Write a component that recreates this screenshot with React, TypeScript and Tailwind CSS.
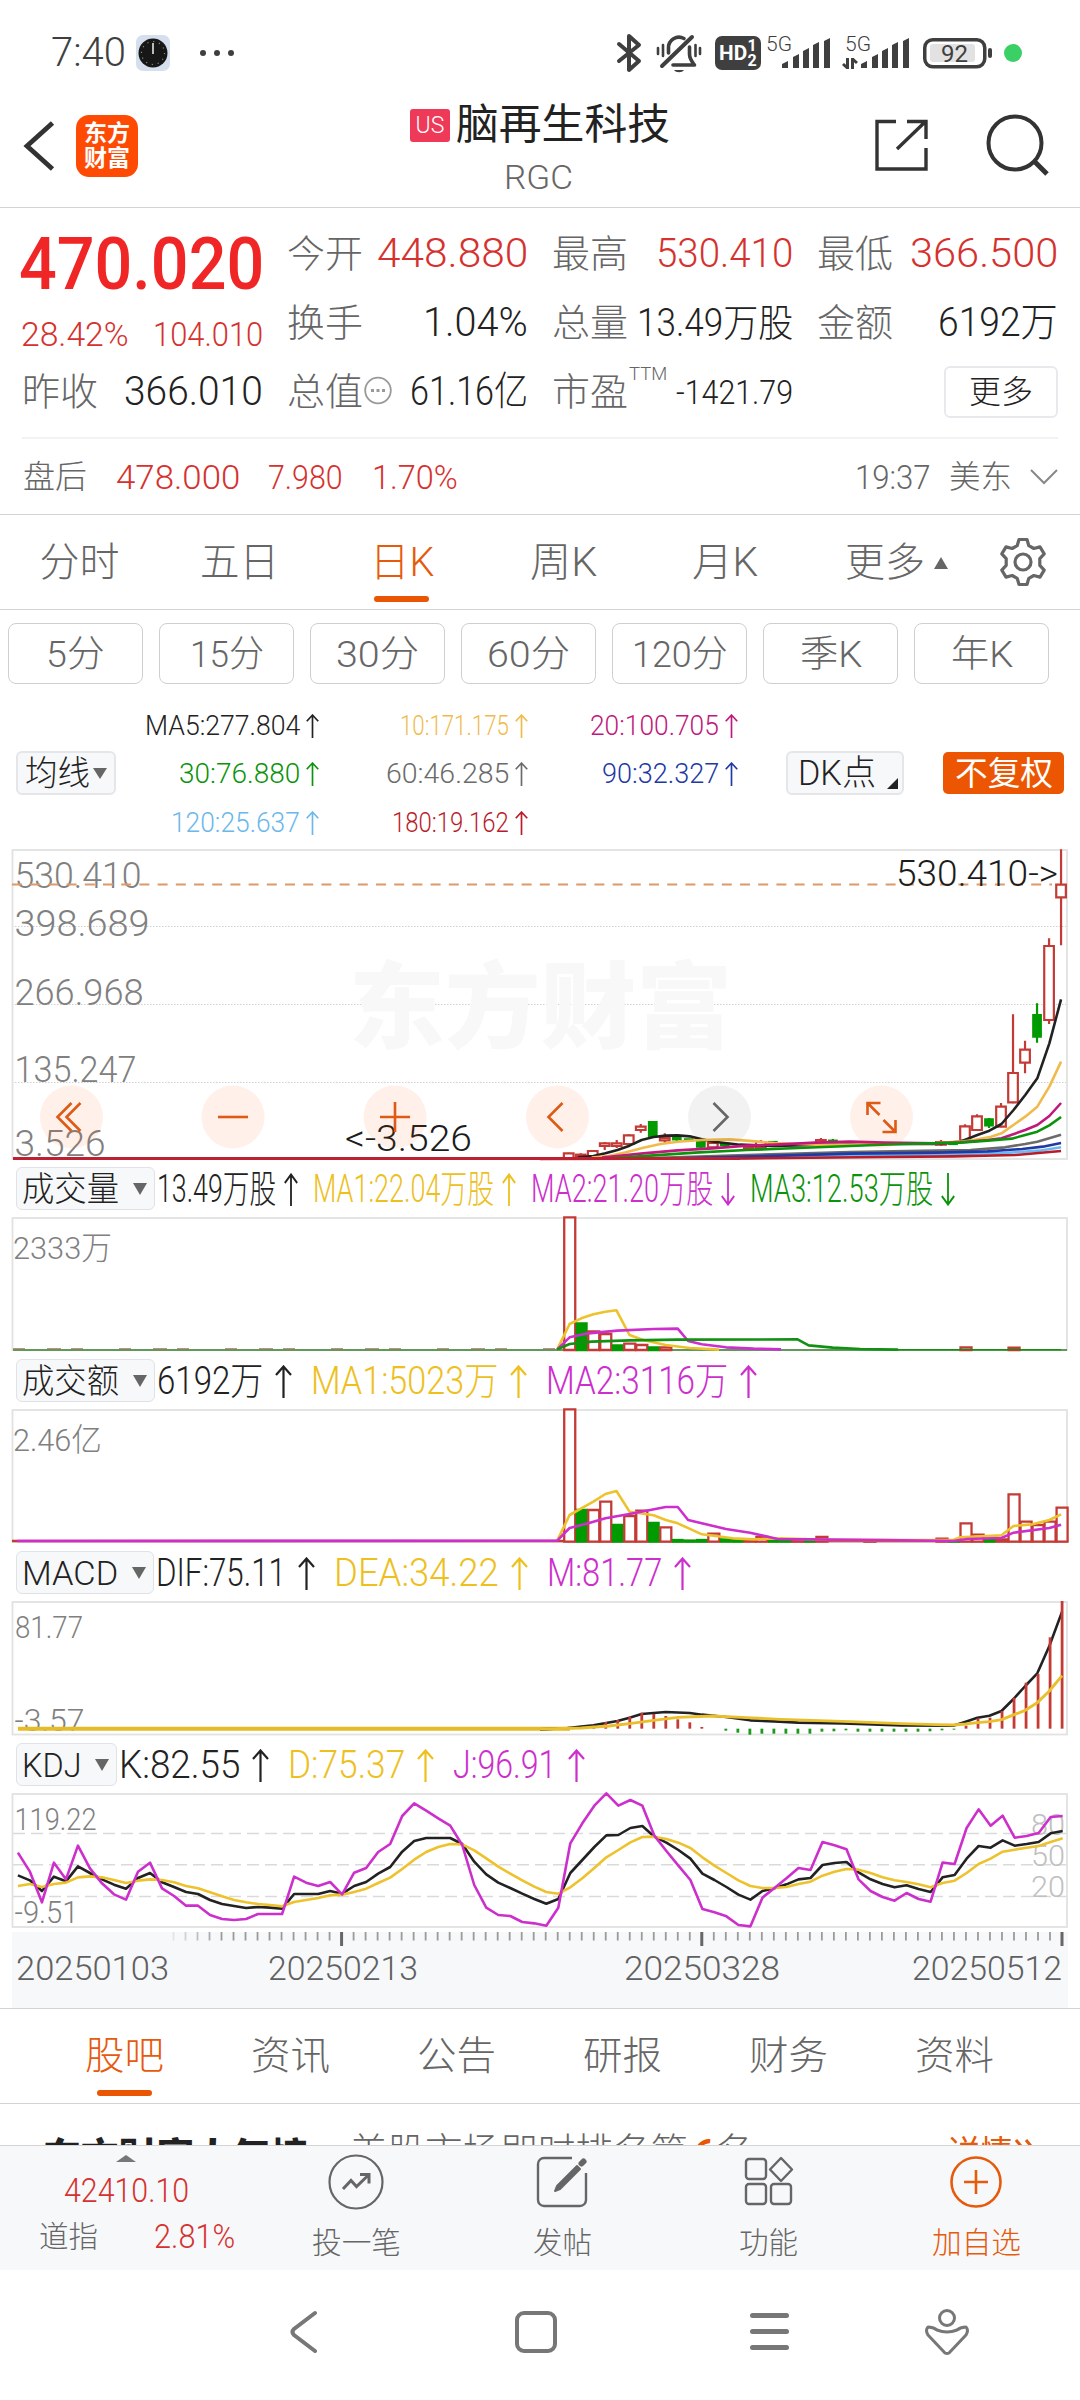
import { useLayoutEffect, useRef, useState } from "react";
import type { ReactNode } from "react";

const RED = "#c43a35";
const GREEN = "#009b00";
const STEP = 34.87;

interface FitProps {
  w: number;
  className?: string;
  children: ReactNode;
}

// Squeezes or stretches a line of text so that it fills exactly `w` pixels
const Fit = ({ w, className = "", children }: FitProps) => {
  const ref = useRef<HTMLSpanElement>(null);
  const [scale, setScale] = useState(1);

  useLayoutEffect(() => {
    if (ref.current) setScale(w / ref.current.offsetWidth);
  }, [w, children]);

  return (
    <span className={`inline-flex shrink-0 leading-none ${className}`} style={{ width: w }}>
      <span ref={ref} className="shrink-0 whitespace-nowrap origin-left" style={{ transform: `scaleX(${scale})` }}>
        {children}
      </span>
    </span>
  );
};

const Arrow = ({ down = false, className = "w-[17px] h-[33px]" }) => (
  <svg
    className={`shrink-0 ${className} ${down ? "rotate-180" : ""}`}
    viewBox="0 0 17 33"
    preserveAspectRatio="none"
    fill="none"
    stroke="currentColor"
    strokeWidth="2.2"
  >
    <path d="M8.5 33V1.5M1 10l7.5-8.5L16 10" />
  </svg>
);

/* ---------- status bar ---------- */

const SignalBars = ({ className = "" }) => (
  <svg className={className} width="48" height="31" viewBox="0 0 48 31" fill="#3f3f3f">
    <path d="M0 30v-4l6-3v7z M11 30V19l6-3v14z M21 30V13l6-3v20z M31 30V7l6-3v26z M42 30V3l6-3v30z" />
  </svg>
);

const StatusBar = () => (
  <div className="h-[105px] flex items-center pl-[51px] pr-[58px] text-[#3f3f3f]">
    <Fit w={75} className="text-[40px] font-light">7:40</Fit>
    <svg className="ml-[10px]" width="34" height="36" viewBox="0 0 34 36">
      <rect width="34" height="36" rx="7" fill="#d5dfee" />
      <circle cx="17" cy="18" r="14.5" fill="#171717" />
      <path d="M17 19V8" stroke="#e5e5e5" strokeWidth="1.6" />
      <circle cx="17" cy="18" r="11.5" fill="none" stroke="#888" strokeWidth="1.2" strokeDasharray="1.2 4.8" />
    </svg>
    <div className="flex gap-2 ml-[30px]">
      <i className="size-[6px] rounded-full bg-[#3f3f3f]" />
      <i className="size-[6px] rounded-full bg-[#3f3f3f]" />
      <i className="size-[6px] rounded-full bg-[#3f3f3f]" />
    </div>

    <div className="flex items-center ml-auto">
      <svg width="26" height="40" viewBox="0 0 26 40" fill="none" stroke="#3f3f3f" strokeWidth="4" strokeLinejoin="round" strokeLinecap="round">
        <path d="M3 11l20 17-10 9V3l10 9L3 28" />
      </svg>
      <svg className="ml-[14px]" width="46" height="40" viewBox="0 0 46 40" fill="none" stroke="#3f3f3f" strokeWidth="3.6" strokeLinecap="round">
        <path d="M6 33L36 4" strokeWidth="4" />
        <path d="M12.500 20v-5a10.500 10.500 0 0 1 15.500-9.500M33.500 14v7c0 5 2 7 5 11H17" strokeLinejoin="round" />
        <path d="M18 37h10c-2 3-8 3-10 0z" fill="#3f3f3f" stroke="none" />
        <path d="M2 15v6M7 12v11M39.500 12v11M44 15v6" strokeWidth="2.600" />
      </svg>
      <div className="ml-[13px] w-[46px] h-[34px] rounded-[7px] bg-[#3f3f3f] text-white font-bold flex items-center justify-center">
        <Fit w={28} className="text-[20px]">HD</Fit>
        <div className="flex flex-col text-[16px] leading-[15px] items-center w-[10px]">
          <span>1</span>
          <span>2</span>
        </div>
      </div>
      <div className="relative ml-[5px] w-[64px] h-[38px]">
        <Fit w={26} className="absolute left-0 top-0 text-[21px] font-light">5G</Fit>
        <SignalBars className="absolute right-0 bottom-[3px]" />
      </div>
      <div className="relative ml-[12px] w-[67px] h-[38px]">
        <Fit w={26} className="absolute left-[3px] top-0 text-[21px] font-light">5G</Fit>
        <svg className="absolute left-0 bottom-[3px]" width="16" height="11" viewBox="0 0 16 11" stroke="#3f3f3f" strokeWidth="3" fill="none">
          <path d="M5.500 0v10L1 6M10.500 11V1L15 5" />
        </svg>
        <SignalBars className="absolute right-0 bottom-[3px]" />
      </div>
      <svg className="ml-[14px]" width="70" height="32" viewBox="0 0 70 32">
        <rect x="1.750" y="2.750" width="60" height="27" rx="8" fill="none" stroke="#3f3f3f" strokeWidth="3.500" />
        <rect x="7" y="7" width="45" height="18" rx="3" fill="#e2e2e2" />
        <rect x="65" y="11" width="4" height="10" rx="2" fill="#3f3f3f" />
        <text x="18" y="24.500" fontSize="23" textLength="27" lengthAdjust="spacingAndGlyphs" fill="#3f3f3f">92</text>
      </svg>
      <i className="ml-[11px] size-[18px] rounded-full bg-[#3ad066]" />
    </div>
  </div>
);

/* ---------- title bar ---------- */

const Header = () => (
  <div className="h-[103px] flex border-b border-[#d4d4d4]">
    <div className="w-[300px] flex items-start pl-[23px]">
      <svg className="mt-[16px]" width="32" height="50" viewBox="0 0 32 50" fill="none" stroke="#333" strokeWidth="4.800">
        <path d="M29.500 2L4 25l25.500 23" />
      </svg>
      <div className="ml-[21px] mt-[10px] size-[62px] rounded-[13px] bg-[#ff4a04] text-white font-bold text-[23px] leading-[25px] pt-[6px] text-center">
        东方<br />财富
      </div>
    </div>
    <div className="flex-1 flex flex-col items-center">
      <div className="flex items-center h-[40px]">
        <span className="w-[40px] h-[33px] rounded-[3px] bg-[#ee3a58] text-white flex items-center justify-center mr-[6px]">
          <Fit w={29} className="text-[23px] font-light">US</Fit>
        </span>
        <Fit w={214} className="text-[42px] text-[#222]">脑再生科技</Fit>
      </div>
      <Fit w={69} className="text-[34px] font-light text-[#666] mt-[15px] mr-[3px]">RGC</Fit>
    </div>
    <div className="w-[300px] flex justify-end gap-[56px] pr-[30px]">
      <svg className="mt-[13px]" width="56" height="56" viewBox="0 0 56 56" fill="none" stroke="#333" strokeWidth="3.400">
        <path d="M22 3.500H3V51h49V30M33 3.500h19V21M23 31L51 4" />
      </svg>
      <svg className="mt-[8px]" width="64" height="66" viewBox="0 0 64 66" fill="none" stroke="#333" strokeWidth="4">
        <circle cx="29" cy="30" r="26.500" />
        <path d="M48 48l13 13" strokeWidth="5" />
      </svg>
    </div>
  </div>
);

/* ---------- quote ---------- */

const Cell = ({ label, value, w, className = "text-[#222] text-[40px]" }: { label: string; value: string; w: number; className?: string }) => (
  <div className="flex items-center justify-between">
    <Fit w={76} className="text-[38px] text-[#666] font-light ml-[-1px]">{label}</Fit>
    <Fit w={w} className={`font-light ${className}`}>{value}</Fit>
  </div>
);

const Quote = () => (
  <div className="h-[307px] px-[22px] pt-[11px] border-b border-[#d4d4d4]">
    <div className="grid grid-cols-4 grid-rows-[69px_69px_69px] gap-x-[25px] pl-px">
      <div className="flex items-center pt-[22px]">
        <Fit w={245} className="text-[73px] font-medium text-[#f02525] ml-[-4px]">470.020</Fit>
      </div>
      <Cell label="今开" value="448.880" w={151} className="text-[41px] text-[#d5322f]" />
      <Cell label="最高" value="530.410" w={137} className="text-[41px] text-[#d5322f]" />
      <Cell label="最低" value="366.500" w={148} className="text-[41px] text-[#d5322f]" />

      <div className="flex items-center justify-between pt-[23px] text-[34px] text-[#d5322f] font-light">
        <Fit w={108} className="ml-[-2px]">28.42%</Fit>
        <Fit w={110}>104.010</Fit>
      </div>
      <Cell label="换手" value="1.04%" w={105} />
      <Cell label="总量" value="13.49万股" w={156} className="text-[38px] text-[#222]" />
      <Cell label="金额" value="6192万" w={120} />

      <Cell label="昨收" value="366.010" w={139} />
      <div className="flex items-center">
        <Fit w={76} className="text-[38px] text-[#666] font-light ml-[-1px]">总值</Fit>
        <svg className="mt-[-2px]" width="29" height="29" viewBox="0 0 29 29" fill="none" stroke="#999">
          <circle cx="15" cy="14.500" r="12.800" strokeWidth="1.800" />
          <path d="M8 14.500h3M13.500 14.500h3M19 14.500h3" strokeWidth="3" />
        </svg>
        <Fit w={118} className="text-[40px] text-[#222] font-light ml-auto">61.16亿</Fit>
      </div>
      <div className="flex items-center">
        <Fit w={76} className="text-[38px] text-[#666] font-light ml-[-1px]">市盈</Fit>
        <Fit w={38} className="text-[18px] text-[#666] font-light self-start mt-[8px] ml-px">TTM</Fit>
        <Fit w={117} className="text-[34px] text-[#222] font-light ml-auto">-1421.79</Fit>
      </div>
      <div className="flex items-center justify-end">
        <div className="w-[114px] h-[52px] rounded-[6px] border-2 border-[#e8e9ec] flex items-center justify-center">
          <Fit w={64} className="text-[32px] text-[#222] font-light">更多</Fit>
        </div>
      </div>
    </div>
    <div className="h-[2px] bg-[#f2f3f4] mt-[11px]" />
    <div className="h-[76px] flex items-center text-[34px] font-light text-[#d5322f] pl-px">
      <Fit w={64} className="text-[32px] text-[#666]">盘后</Fit>
      <Fit w={124} className="ml-[29px]">478.000</Fit>
      <Fit w={75} className="ml-[28px]">7.980</Fit>
      <Fit w={86} className="ml-[29px]">1.70%</Fit>
      <Fit w={76} className="text-[#666] ml-auto">19:37</Fit>
      <Fit w={63} className="text-[32px] text-[#666] ml-[18px]">美东</Fit>
      <svg className="ml-[18px]" width="28" height="16" viewBox="0 0 28 16" fill="none" stroke="#888" strokeWidth="2">
        <path d="M1 1l13 13L27 1" />
      </svg>
    </div>
  </div>
);

/* ---------- period tabs ---------- */

const periods = [
  { name: "分时", w: 80, box: "w-[159px]" },
  { name: "五日", w: 79, box: "w-[161px]" },
  { name: "日K", w: 64, box: "w-[163px]", active: true },
  { name: "周K", w: 67, box: "w-[161px]" },
  { name: "月K", w: 66, box: "w-[161px]" },
];

const PeriodTabs = () => (
  <div className="h-[95px] flex items-stretch border-b border-[#d4d4d4] text-[40px] font-light text-[#666]">
    {periods.map((p) => (
      <div key={p.name} className={`${p.box} relative flex items-center justify-center pt-[2px] ${p.active ? "text-[#e65a0c]" : ""}`}>
        <Fit w={p.w}>{p.name}</Fit>
        {p.active && <i className="absolute bottom-[7px] w-[55px] h-[6px] rounded-full bg-[#ea5504]" />}
      </div>
    ))}
    <div className="flex items-center pl-[40px] pt-[2px]">
      <Fit w={80}>更多</Fit>
      <svg className="ml-[9px]" width="14" height="12" viewBox="0 0 14 12" fill="#666"><path d="M7 0l7 12H0z" /></svg>
      <svg className="ml-[50px] mb-[2px]" width="50" height="50" viewBox="0 0 50 50" fill="none" stroke="#666" strokeWidth="3.200" strokeLinejoin="round">
        <path d="M21 2.500h8l1.800 6.200 5 2.800 6.200-1.600 4.200 7-4.400 4.700v6.800l4.400 4.700-4.200 7-6.200-1.600-5 2.800-1.800 6.200h-8l-1.800-6.200-5-2.800-6.200 1.600-4.200-7 4.400-4.700v-6.800l-4.400-4.700 4.200-7 6.200 1.600 5-2.800z" />
        <circle cx="25" cy="25" r="8" />
      </svg>
    </div>
  </div>
);

const minutes = [
  { name: "5分", w: 59 },
  { name: "15分", w: 74 },
  { name: "30分", w: 83 },
  { name: "60分", w: 83 },
  { name: "120分", w: 96 },
  { name: "季K", w: 62 },
  { name: "年K", w: 62 },
];

const MinuteButtons = () => (
  <div className="h-[74px] flex gap-[16px] pl-[8px] pt-[13px]">
    {minutes.map((m) => (
      <div key={m.name} className="w-[135px] h-[61px] rounded-[8px] border-[1.5px] border-[#cfcfcf] flex items-center justify-center pt-px text-[37px] font-light text-[#666]">
        <Fit w={m.w}>{m.name}</Fit>
      </div>
    ))}
  </div>
);

/* ---------- moving average legend ---------- */

const averages = [
  { text: "MA5:277.804", w: 155, color: "text-[#222]" },
  { text: "10:171.175", w: 109, color: "text-[#f0bb4c]" },
  { text: "20:100.705", w: 129, color: "text-[#c0187c]" },
  { text: "30:76.880", w: 121, color: "text-[#0c930c]" },
  { text: "60:46.285", w: 123, color: "text-[#6b6b6b]" },
  { text: "90:32.327", w: 117, color: "text-[#2238a4]" },
  { text: "120:25.637", w: 129, color: "text-[#6cb8ea]" },
  { text: "180:19.162", w: 117, color: "text-[#b81c2a]" },
];

const Legend = () => (
  <div className="h-[165px] flex items-center pt-[14px] pb-[1px]">
    <div className="ml-[16px] w-[100px] h-[44px] rounded-[6px] border-2 border-[#e4e6ea] bg-[#f7f8fa] flex items-center pl-[7px]">
      <Fit w={65} className="text-[34px] text-[#222] font-light">均线</Fit>
      <svg className="ml-[3px]" width="14" height="11" viewBox="0 0 14 11" fill="#666"><path d="M0 0h14L7 11z" /></svg>
    </div>
    <div className="ml-[14px] pt-[2px] grid grid-cols-[189px_209px_210px] auto-rows-[48.5px] text-[28px] font-light">
      {averages.map((a) => (
        <div key={a.text} className={`flex items-center justify-end gap-[6px] ${a.color}`}>
          <Fit w={a.w}>{a.text}</Fit>
          <Arrow className="w-[13px] h-[24px]" />
        </div>
      ))}
    </div>
    <div className="relative ml-[48px] w-[118px] h-[44px] rounded-[6px] border-2 border-[#e4e6ea] bg-[#f7f8fa] flex items-center pl-[10px]">
      <Fit w={78} className="text-[35px] text-[#222] font-light">DK点</Fit>
      <svg className="absolute right-[4px] bottom-[4px]" width="11" height="11" viewBox="0 0 11 11" fill="#222"><path d="M11 0v11H0z" /></svg>
    </div>
    <div className="ml-[39px] w-[121px] h-[42px] rounded-[5px] bg-[#ec5602] text-white flex items-center justify-center">
      <Fit w={98} className="text-[33px]">不复权</Fit>
    </div>
  </div>
);

/* ---------- charts ---------- */

// Chart data is kept in a half-width plot space: x from 0 at the middle of the screen, 34.87 per trading day
const Plot = ({ top, left = 540, children }: { top: number; left?: number; children: ReactNode }) => (
  <g transform={`translate(${left} ${top}) scale(${540 / 1568} ${1 / 3})`}>{children}</g>
);

const Line = ({ points, color, width = 2.6 }: { points: string; color: string; width?: number }) => (
  <polyline points={points} fill="none" stroke={color} strokeWidth={width} strokeLinejoin="round" vectorEffect="non-scaling-stroke" />
);

const Label = ({ x, y, w, size = 37, color = "#808080", children }: { x: number; y: number; w: number; size?: number; color?: string; children: string }) => (
  <text x={x} y={y} fontSize={size} fill={color} textLength={w} lengthAdjust="spacingAndGlyphs" fontWeight="300">
    {children}
  </text>
);

const Frame = ({ y, h }: { y: number; h: number }) => (
  <rect x="12.500" y={y} width="1054.500" height={h} fill="none" stroke="#e2e2e2" strokeWidth="1.800" />
);

// [days back, high, body top, body bottom, low, up]
const candles: [number, number, number, number, number, number][] = [
  [0, 28, 134, 172, 316, 1], [1, 295, 318, 540, 552, 1], [2, 490, 525, 590, 608, 0], [3, 602, 629, 668, 700, 1],
  [4, 523, 699, 787, 790, 1], [5, 789, 800, 860, 862, 1], [6, 834, 838, 856, 864, 0], [7, 823, 829, 870, 872, 1],
  [8, 853, 859, 902, 904, 1], [9, 905, 908, 912, 914, 0], [10, 900, 906, 914, 918, 1], [19, 897, 902, 908, 910, 0],
  [20, 894, 900, 908, 912, 1], [24, 903, 906, 912, 914, 0], [25, 900, 906, 924, 926, 1], [26, 914, 918, 924, 926, 1],
  [28, 908, 911, 915, 917, 0], [29, 905, 909, 922, 924, 1], [30, 902, 906, 920, 924, 0], [31, 897, 898, 901, 902, 0],
  [32, 888, 894, 898, 903, 0], [33, 880, 894, 901, 908, 1], [34, 844, 846, 888, 890, 0], [35, 852, 860, 870, 878, 1],
  [36, 883, 886, 912, 914, 1], [37, 900, 910, 918, 924, 1], [38, 906, 910, 918, 930, 1], [39, 930, 933, 950, 952, 1],
  [40, 940, 944, 950, 954, 1], [41, 938, 940, 955, 957, 1],
];

const priceLines = [
  { color: "#222", points: "110,952 155,948 190,940 225,930 260,917 295,900 330,891 365,887 399,886 435,889 470,898 505,905 580,914 680,918 800,915 900,912 1000,912 1150,912 1220,905 1270,885 1305,872 1340,852 1375,810 1409,765 1444,715 1479,610 1513,478" },
  { color: "#f0bb4c", points: "150,953 200,948 250,937 300,923 350,912 400,905 470,900 550,898 600,902 680,909 800,914 900,914 1000,911 1150,909 1220,905 1260,900 1310,890 1340,880 1409,830 1444,800 1479,740 1513,665" },
  { color: "#c0187c", points: "180,953 300,940 400,931 500,925 600,917 700,913 800,908 900,905 1000,908 1150,910 1220,907 1300,900 1340,895 1409,870 1444,855 1479,828 1513,789" },
  { color: "#6b6b6b", points: "300,955 600,945 900,936 1150,932 1250,930 1350,922 1409,912 1444,905 1513,884" },
  { color: "#6cb8f0", points: "500,955 900,947 1150,943 1350,939 1450,932 1513,922" },
  { color: "#2238a4", points: "400,955 700,947 900,941 1150,938 1300,934 1400,927 1460,920 1513,909" },
  { color: "#0c930c", points: "200,955 320,947 450,938 600,930 750,924 900,918 1050,912 1220,908 1300,902 1370,896 1409,885 1444,875 1479,856 1513,831" },
  { color: "#b81c2a", points: "0,957 600,955 1000,951 1200,949 1380,945 1513,933" },
];

const tools = [
  { cx: 71.5, d: "M0-14L-14 0 0 14M9-14L-5 0 9 14" },
  { cx: 233, d: "M-15 0H15" },
  { cx: 395, d: "M-15 0H15M0-15V15" },
  { cx: 557.5, d: "M5-14L-9 0 5 14" },
  { cx: 719.5, d: "M-6-14L8 0-6 14", off: true },
  { cx: 881.5, d: "M-14-2V-14H-1M-13-13L-2-2M14 3V15H1M13 14L2 3" },
];

const PriceChart = () => (
  <svg className="block overflow-visible" width="1080" height="311" viewBox="0 849 1080 311">
    <g stroke="#d0d0d0" strokeWidth="1" strokeDasharray="1.500 1.500">
      <path d="M12 926.500H1067M12 1004.500H1067M12 1082.500H1067" />
    </g>
    <Frame y={850} h={309} />
    <text x="349" y="1041" fontSize="94" fontWeight="900" fill="#f8f8f8" textLength="383" lengthAdjust="spacingAndGlyphs">东方财富</text>
    <Label x={14.500} y={887.500} w={127}>530.410</Label>
    <Label x={14.500} y={936} w={135}>398.689</Label>
    <Label x={14.500} y={1004.500} w={129}>266.968</Label>
    <Label x={14.500} y={1081.500} w={122}>135.247</Label>
    <Label x={14.500} y={1155.500} w={91}>3.526</Label>
    <path d="M12 884.500H1052" stroke="#dc9a6c" strokeWidth="1.800" strokeDasharray="10 8.200" />
    <Label x={896} y={886} w={162} color="#1c1c1c">530.410-&gt;</Label>
    <Label x={345} y={1151} w={127} color="#1c1c1c">&lt;-3.526</Label>

    <Plot top={840}>
      {candles.map(([back, high, top, bottom, low, up]) => {
        const x = 1513 - back * STEP;
        const color = up ? RED : GREEN;
        return (
          <g key={back} stroke={color} strokeWidth="2.200">
            <path d={`M${x} ${high}V${top}M${x} ${bottom}V${low}`} vectorEffect="non-scaling-stroke" />
            <rect x={up ? x - 14 : x - 11} y={top} width={up ? 28 : 22} height={bottom - top} fill={up ? "#fff" : color} vectorEffect="non-scaling-stroke" />
          </g>
        );
      })}
      {priceLines.map((l) => <Line key={l.color} {...l} />)}
    </Plot>
    <path d="M13 1158.500H740" stroke="#bd2030" strokeWidth="2.800" />

    {tools.map((t) => (
      <g key={t.cx} transform={`translate(${t.cx} 1117)`}>
        <circle r="31.500" fill={t.off ? "#000" : "#ff5500"} opacity={t.off ? 0.05 : 0.085} />
        <path d={t.d} fill="none" stroke={t.off ? "#666" : "#df5a14"} strokeWidth="2.600" />
      </g>
    ))}
  </svg>
);

// [days back, bar top, up]
const volumes: [number, number, number][] = [
  [41, 172, 1], [40, 490, 0], [39, 514, 1], [38, 522, 1], [37, 556, 0], [36, 551, 1], [35, 555, 1], [34, 562, 0],
  [33, 562, 1], [8, 562, 1], [4, 563, 1],
];

const amounts: [number, number, number][] = [
  [41, 748, 1], [40, 1050, 0], [39, 1050, 1], [38, 1025, 1], [37, 1095, 0], [36, 1068, 1], [35, 1052, 1],
  [34, 1089, 0], [33, 1102, 1], [32, 1140, 0], [31, 1142, 0], [30, 1140, 0], [29, 1121, 1], [28, 1138, 0],
  [27, 1140, 0], [26, 1138, 1], [25, 1131, 1], [24, 1141, 0], [23, 1142, 0], [22, 1141, 1], [21, 1143, 0],
  [20, 1131, 1], [16, 1143, 1], [10, 1136, 1], [9, 1143, 0], [8, 1090, 1], [7, 1124, 1], [6, 1140, 0],
  [5, 1138, 1], [4, 1003, 1], [3, 1085, 1], [2, 1095, 1], [1, 1085, 1], [0, 1043, 1],
];

const Bars = ({ data, base }: { data: [number, number, number][]; base: number }) => (
  <>
    {data.map(([back, top, up]) => (
      <rect
        key={back}
        x={1516 - back * STEP - (up ? 16 : 14)}
        y={top}
        width={up ? 32 : 28}
        height={base - top}
        fill={up ? "#fff" : GREEN}
        stroke={up ? RED : GREEN}
        strokeWidth="2.300"
        vectorEffect="non-scaling-stroke"
      />
    ))}
  </>
);

const VolumeChart = () => (
  <svg className="block overflow-visible" width="1080" height="135" viewBox="0 1217 1080 135">
    <Frame y={1218} h={132} />
    <Label x={13} y={1258.500} w={99} size={32}>2333万</Label>
    <path d="M13 1349H560" stroke="#c98a80" strokeWidth="2" strokeDasharray="12 22 14 10 12 36" />
    <path d="M13 1350H1067" stroke="#5f9a5c" strokeWidth="1.800" />
    <Plot top={1160}>
      <Bars data={volumes} base={570} />
      <Line color="#edc22c" points="50,568 86,492 120,475 155,463 190,455 222,451 260,525 300,540 365,555 435,564 520,569" />
      <Line color="#cc2fcc" points="50,568 86,532 140,520 225,512 330,507 400,506 430,543 470,553 540,562 620,566 700,568" />
      <Line color="#119011" points="50,568 86,552 150,545 260,541 400,539 748,538 780,556 850,563 930,567 1040,569" />
      <Line color="#119011" width={1.4} points="1040,569 1513,569" />
    </Plot>
  </svg>
);

const AmountChart = () => (
  <svg className="block overflow-visible" width="1080" height="135" viewBox="0 1409 1080 135">
    <Frame y={1410} h={132} />
    <Label x={13} y={1451} w={89} size={32}>2.46亿</Label>
    <path d="M12 1541H1067" stroke={RED} strokeWidth="2.500" />
    <Plot top={1160}>
      <Bars data={amounts} base={1145} />
      <Line color="#edc22c" points="50,1142 86,1065 120,1045 155,1025 190,1002 222,993 260,1055 330,1066 365,1080 400,1090 470,1123 560,1135 620,1138 700,1135 850,1140 1200,1140 1220,1132 1340,1126 1375,1098 1430,1093 1479,1080 1513,1063" />
      <Line color="#cc2fcc" points="-1518,1143 50,1142 86,1104 140,1090 190,1075 260,1062 365,1041 400,1041 430,1080 540,1107 610,1118 690,1137 850,1139 1000,1140 1200,1143 1240,1137 1340,1134 1375,1118 1479,1104 1513,1094" />
    </Plot>
  </svg>
);

const macdUp = [183, 292, 402, 428, 473, 513, 533, 535, 557];
const macdDown = [569, 571, 574, 575, 575, 575, 575, 575, 575, 571, 574, 575, 581, 581, 581, 581, 581, 584, 578, 572];
const macdHump = [561, 547, 538, 528, 522, 518, 530, 540, 546, 557, 561, 563];

const MacdChart = () => (
  <svg className="block overflow-visible" width="1080" height="135" viewBox="0 1601 1080 135">
    <Frame y={1602} h={132.500} />
    <Label x={15} y={1638} w={68} size={31}>81.77</Label>
    <Label x={14.500} y={1731} w={70} size={31}>-3.57</Label>
    <path d="M18 1728.800H570" stroke="#e6bb28" strokeWidth="4" />
    <Plot top={1540}>
      <Line color="#222" points="0,568 80,564 155,556 225,543 260,533 295,522 365,516 435,519 470,524 540,531 610,541 680,544 750,548 880,550 1050,556 1200,557 1236,545 1270,533 1305,527 1340,513 1375,477 1409,438 1444,400 1479,318 1516,215" />
      <g strokeWidth="2.800">
        {macdUp.map((y, i) => <path key={i} d={`M${1516 - i * STEP} 566V${y}`} stroke={RED} vectorEffect="non-scaling-stroke" />)}
        {macdDown.map((y, i) => <path key={i} d={`M${1516 - (i + 9) * STEP} 566V${y}`} stroke="#1c9a1c" vectorEffect="non-scaling-stroke" />)}
        {macdHump.map((y, i) => <path key={i} d={`M${1516 - (i + 30) * STEP} 566V${y}`} stroke={RED} vectorEffect="non-scaling-stroke" />)}
      </g>
      <Line color="#e9c02c" points="0,567 120,564 200,558 260,551 330,541 400,532 500,528 600,533 700,538 900,545 1050,551 1150,554 1200,555 1236,552 1270,548 1305,545 1340,539 1409,511 1444,488 1479,453 1516,407" width={2.9} />
    </Plot>
  </svg>
);

const kValues = [
  1006, 1021, 1053, 1010, 1024, 979, 999, 1018, 1034, 1046, 1014, 999, 1027, 1041, 1056, 1062, 1080, 1092, 1098, 1104, 1101,
  1103, 1106, 1062, 1062, 1062, 1053, 1061, 1038, 1026, 1001, 981, 935, 903, 894, 894, 894, 912, 965, 1003, 1028, 1044, 1061,
  1077, 1091, 1077, 999, 960, 921, 886, 885, 864, 858, 890, 908, 930, 956, 1001, 1020, 1041, 1064, 1079, 1053, 1045, 1033,
  1018, 1014, 975, 969, 966, 997, 1018, 1032, 1042, 1036, 1047, 1056, 1012, 1005, 956, 918, 923, 901, 917, 912, 906, 880, 873,
];
const dValues = [
  1038, 1032, 1041, 1032, 1028, 1012, 1009, 1012, 1020, 1029, 1022, 1018, 1020, 1027, 1038, 1045, 1057, 1069, 1080, 1087, 1092,
  1095, 1099, 1086, 1080, 1074, 1066, 1064, 1056, 1046, 1029, 1013, 987, 959, 936, 921, 912, 913, 931, 955, 980, 1001, 1021,
  1040, 1056, 1061, 1042, 1015, 984, 952, 930, 907, 891, 890, 897, 908, 924, 952, 977, 999, 1021, 1038, 1044, 1044, 1041, 1032,
  1025, 1007, 995, 987, 989, 999, 1012, 1021, 1026, 1033, 1042, 1029, 1022, 999, 972, 956, 935, 929, 923, 918, 906, 895,
];
const jValues = [
  938, 995, 1087, 968, 1018, 917, 985, 1030, 1063, 1079, 995, 968, 1045, 1068, 1097, 1097, 1125, 1137, 1140, 1137, 1122, 1122,
  1122, 1010, 1028, 1038, 1026, 1063, 998, 984, 936, 912, 828, 790, 812, 835, 857, 915, 1035, 1103, 1125, 1128, 1146, 1150,
  1157, 1103, 910, 850, 797, 760, 797, 780, 797, 887, 933, 977, 1020, 1107, 1117, 1129, 1155, 1159, 1073, 1044, 1015, 984, 990,
  906, 916, 928, 1018, 1053, 1071, 1082, 1059, 1077, 1085, 968, 972, 864, 808, 857, 827, 893, 888, 879, 831, 828,
];

const toPoints = (values: number[]) => values.map((y, i) => `${52 + i * STEP},${y}`).join(" ");

const KdjChart = () => (
  <svg className="block overflow-visible" width="1080" height="135" viewBox="0 1793 1080 135">
    <path d="M13 1833.500H1067M13 1864.700H1067M13 1896.500H1067" stroke="#dadada" strokeWidth="1.500" strokeDasharray="12 6" />
    <Frame y={1794} h={133} />
    <Label x={14.500} y={1830} w={82} size={31}>119.22</Label>
    <Label x={14.500} y={1922.500} w={64} size={31}>-9.51</Label>
    <Label x={1031} y={1834.500} w={34} size={29} color="#c0c0c0">80</Label>
    <Label x={1031} y={1865.500} w={34} size={29} color="#c0c0c0">50</Label>
    <Label x={1031} y={1896.500} w={34} size={29} color="#c0c0c0">20</Label>
    <Plot top={1540} left={0}>
      <Line color="#222" points={toPoints(kValues)} />
      <Line color="#edc22c" points={toPoints(dValues)} />
      <Line color="#cc2fcc" points={toPoints(jValues)} />
    </Plot>
  </svg>
);

const ticks = Array.from({ length: 75 }, (_, i) => i);

const Axis = () => (
  <svg className="block" width="1080" height="80" viewBox="0 1928 1080 80">
    <rect x="12" y="1932" width="1056" height="76" fill="#f7f8fa" />
    {ticks.map((i) => {
      const big = i === 0 || i === 30 || i === 60;
      return (
        <path
          key={i}
          d={`M${1062 - i * 12.007} 1932V${big ? 1946 : 1940.5}`}
          stroke={big ? "#666" : "#9a9a9a"}
          strokeWidth={big ? 3 : 1.8}
          opacity={i > 70 ? (75 - i) / 5 : 1}
        />
      );
    })}
    <Label x={16} y={1980} w={153} size={34} color="#606060">20250103</Label>
    <Label x={268} y={1980} w={150} size={34} color="#606060">20250213</Label>
    <Label x={624} y={1980} w={156} size={34} color="#606060">20250328</Label>
    <Label x={912} y={1980} w={150} size={34} color="#606060">20250512</Label>
  </svg>
);

/* ---------- indicator headers ---------- */

interface Reading {
  text: string;
  w: number;
  color: string;
  down?: boolean;
}

const yellow = "text-[#edc01e]";
const purple = "text-[#cc2fcc]";

const IndicatorBar = ({ name, w, box, readings, tight = false }: { name: string; w: number; box: string; readings: Reading[]; tight?: boolean }) => (
  <div className="h-[57px] flex items-center pl-[16px] text-[38px] font-light text-[#222]">
    <div className={`${box} h-[43px] rounded-[6px] border-[1.5px] border-[#dfe2e6] bg-[#f7f8fa] flex items-center justify-between pl-[5px] pr-[7px] mr-[2px]`}>
      <Fit w={w} className="text-[34px]">{name}</Fit>
      <svg width="14" height="12" viewBox="0 0 14 12" fill="#666"><path d="M0 0h14L7 12z" /></svg>
    </div>
    <div className={`flex items-center pt-px ${tight ? "gap-[15px]" : "gap-[19px]"}`}>
      {readings.map((r) => (
        <div key={r.text} className={`flex items-center ${r.color} ${tight ? "gap-[8px]" : "gap-[12px]"}`}>
          <Fit w={r.w}>{r.text}</Fit>
          <Arrow down={r.down} className={tight ? "w-[14px] h-[33px]" : "w-[17px] h-[33px]"} />
        </div>
      ))}
    </div>
  </div>
);

/* ---------- bottom part ---------- */

const sections = ["股吧", "资讯", "公告", "研报", "财务", "资料"];

const SectionTabs = () => (
  <div className="h-[96px] border-y border-[#d4d4d4] flex pl-[41px] text-[39px] font-light text-[#666]">
    {sections.map((s, i) => (
      <div key={s} className={`w-[166px] relative flex items-center justify-center pt-px ${i === 0 ? "text-[#e65a0c]" : ""}`}>
        <Fit w={79}>{s}</Fit>
        {i === 0 && <i className="absolute bottom-[7px] w-[55px] h-[6px] rounded-full bg-[#ea5504]" />}
      </div>
    ))}
  </div>
);

const RankRow = () => (
  <div className="h-[41px] overflow-hidden flex items-start pt-[29px] pl-[43px] pr-[43px]">
    <Fit w={265} className="text-[38px] font-black text-[#222] mt-[5px]">东方财富人气榜</Fit>
    <Fit w={338} className="text-[38px] font-light text-[#666] ml-[42px]">美股市场即时排名第</Fit>
    <span className="text-[38px] leading-none font-bold italic text-[#ea5504] mt-[2px] ml-[4px]">6</span>
    <Fit w={38} className="text-[38px] font-light text-[#666] ml-[2px]">名</Fit>
    <Fit w={66} className="text-[33px] text-[#e65a0c] ml-auto mt-[3px]">详情</Fit>
    <svg className="mt-[6px] ml-[2px]" width="22" height="24" viewBox="0 0 22 24" fill="none" stroke="#e65a0c" strokeWidth="3">
      <path d="M1 1l9 11-9 11M11 1l9 11-9 11" />
    </svg>
  </div>
);

const BottomBar = () => (
  <div className="h-[125px] border-t border-[#d4d4d4] bg-[#f7f8fa] flex text-[30px] font-light text-[#666]">
    <div className="w-[253px] flex flex-col items-center pt-[9px] pr-px">
      <svg width="20" height="7" viewBox="0 0 20 7" fill="#777"><path d="M10 0l10 7H0z" /></svg>
      <Fit w={125} className="text-[34px] text-[#d5322f] mt-[11px]">42410.10</Fit>
      <div className="flex items-center gap-[56px] mt-[13px] mr-[-22px]">
        <Fit w={59}>道指</Fit>
        <Fit w={81} className="text-[33px] text-[#d5322f]">2.81%</Fit>
      </div>
    </div>
    <div className="w-[206px] flex flex-col items-center pt-[7px]">
      <svg width="58" height="58" viewBox="0 0 58 58" fill="none" stroke="#666">
        <circle cx="29" cy="29" r="26.500" strokeWidth="2.200" />
        <path d="M16 36l8-8.500 5.500 6L41 22.500M33 21.500h9v9" strokeWidth="3" />
      </svg>
      <Fit w={89} className="mt-[17px]">投一笔</Fit>
    </div>
    <div className="w-[206px] flex flex-col items-center pt-[7px]">
      <svg width="54" height="58" viewBox="0 0 54 58" fill="none" stroke="#666">
        <path d="M37 5H9a6 6 0 0 0-6 6v36a6 6 0 0 0 6 6h36a6 6 0 0 0 6-6V20" strokeWidth="2.400" />
        <path d="M22 33L42 13l3 3L25 36l-5 2z" fill="#666" strokeWidth="2" strokeLinejoin="round" />
        <path d="M46.500 10.500l2-2" strokeWidth="6" strokeLinecap="round" />
      </svg>
      <Fit w={59} className="mt-[17px]">发帖</Fit>
    </div>
    <div className="w-[207px] flex flex-col items-center pt-[7px]">
      <svg width="50" height="58" viewBox="0 0 50 58" fill="none" stroke="#666" strokeWidth="2.400" strokeLinejoin="round">
        <rect x="2" y="6" width="20" height="20" rx="3" />
        <rect x="2" y="31" width="20" height="20" rx="3" />
        <rect x="27" y="31" width="20" height="20" rx="3" />
        <path d="M37 5l11 11.500L37 28 26 16.500z" />
      </svg>
      <Fit w={59} className="mt-[17px]">功能</Fit>
    </div>
    <div className="w-[208px] flex flex-col items-center pt-[7px] text-[#e65a0c]">
      <svg width="58" height="58" viewBox="0 0 58 58" fill="none" stroke="#e65a0c" strokeWidth="2.600">
        <circle cx="29" cy="29" r="24.500" />
        <path d="M17 29h24M29 17v24" />
      </svg>
      <Fit w={89} className="mt-[17px]">加自选</Fit>
    </div>
  </div>
);

const SystemNav = () => (
  <div className="h-[130px] bg-white flex items-center pl-[289px] pb-[7px]">
    <svg width="30" height="44" viewBox="0 0 30 44" fill="none" stroke="#777" strokeWidth="4" strokeLinecap="round">
      <path d="M26 3L5 19q-3 3 0 6l21 16" />
    </svg>
    <div className="ml-[196px] w-[42px] h-[42px] rounded-[9px] border-[4px] border-[#777]" />
    <div className="ml-[193px] w-[39px] flex flex-col gap-[11px]">
      <i className="h-[5px] rounded-full bg-[#777]" />
      <i className="h-[5px] rounded-full bg-[#777]" />
      <i className="h-[5px] rounded-full bg-[#777]" />
    </div>
    <svg className="ml-[135px]" width="46" height="48" viewBox="0 0 46 48" fill="none" stroke="#777" strokeWidth="3" strokeLinejoin="round">
      <circle cx="23" cy="10" r="7.500" />
      <path d="M4 19q5 0 9 3 10 4 20 0 4-3 9-3 3 3 0 8L25 45q-2 1-4 0L4 27q-3-5 0-8z" />
    </svg>
  </div>
);

const App = () => {
  return (
    <div className="w-[1080px] h-[2400px] flex flex-col overflow-hidden bg-white font-['Roboto','Noto_Sans_CJK_SC',sans-serif] [&>*]:shrink-0">
      <StatusBar />
      <Header />
      <Quote />
      <PeriodTabs />
      <MinuteButtons />
      <Legend />

      <PriceChart />
      <IndicatorBar
        name="成交量"
        w={97}
        box="w-[139px]"
        tight
        readings={[
          { text: "13.49万股", w: 119, color: "" },
          { text: "MA1:22.04万股", w: 181, color: yellow },
          { text: "MA2:21.20万股", w: 182, color: purple, down: true },
          { text: "MA3:12.53万股", w: 183, color: "text-[#0c930c]", down: true },
        ]}
      />
      <VolumeChart />
      <IndicatorBar
        name="成交额"
        w={97}
        box="w-[139px]"
        readings={[
          { text: "6192万", w: 106, color: "" },
          { text: "MA1:5023万", w: 187, color: yellow },
          { text: "MA2:3116万", w: 182, color: purple },
        ]}
      />
      <AmountChart />
      <IndicatorBar
        name="MACD"
        w={96}
        box="w-[138px]"
        readings={[
          { text: "DIF:75.11", w: 130, color: "" },
          { text: "DEA:34.22", w: 165, color: yellow },
          { text: "M:81.77", w: 115, color: purple },
        ]}
      />
      <MacdChart />
      <IndicatorBar
        name="KDJ"
        w={59}
        box="w-[101px]"
        readings={[
          { text: "K:82.55", w: 121, color: "" },
          { text: "D:75.37", w: 117, color: yellow },
          { text: "J:96.91", w: 103, color: purple },
        ]}
      />
      <KdjChart />
      <Axis />

      <SectionTabs />
      <RankRow />
      <BottomBar />
      <SystemNav />
    </div>
  );
};

export default App;
